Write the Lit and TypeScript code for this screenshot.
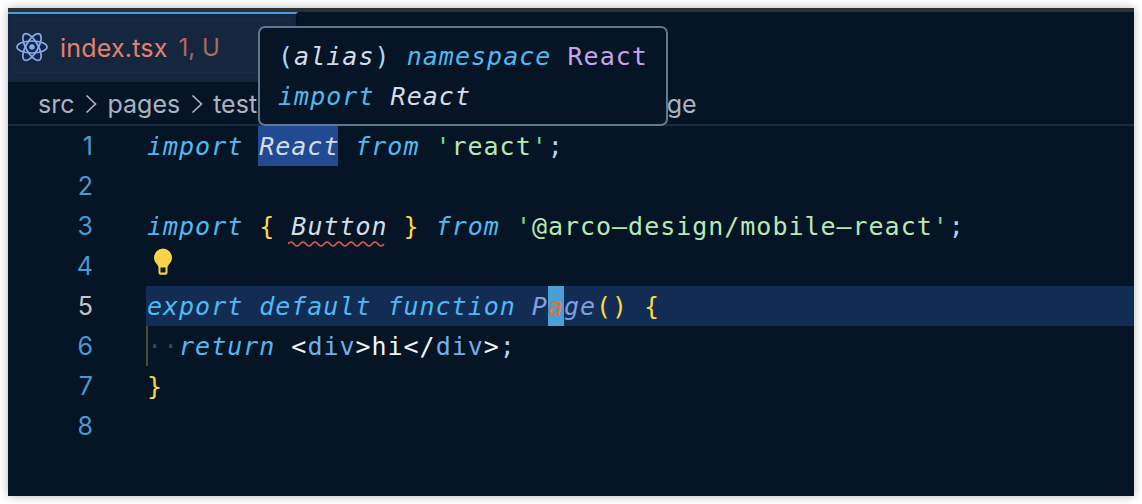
import { LitElement, html, css } from "lit";
import { customElement } from "lit/decorators.js";

const chevron = html`<svg class="chev" viewBox="0 0 12 20" width="12" height="20"><path d="M1.500 1.500 10.500 10 1.500 18.500" fill="none" stroke="#a9b3c1" stroke-width="1.7"/></svg>`;

@customElement("app-root")
export class AppRoot extends LitElement {
  static styles = css`
    :host { display: block; width: 1142px; height: 504px; background: #fff; padding: 8px; box-sizing: border-box; overflow: hidden; }
    .window { position: relative; height: 488px; display: flex; flex-direction: column; background: #051525; border-top: 4px solid #2f3234; box-sizing: border-box; box-shadow: 0 0 9px rgba(0,0,0,.28); overflow: hidden; }
    .tabbar { height: 70px; display: flex; flex: none; }
    .tab { width: 290px; box-sizing: border-box; background: #15273f; border-top: 2px solid #4a9fd8; border-right: 2px solid #0a0f15; padding: 6px 6px 9px; }
    .tab-inner { height: 100%; box-sizing: border-box; border: 1px solid #1a2d47; display: flex; align-items: center; padding-left: 1px; font-family: Inter, "Liberation Sans", sans-serif; }
    .react { flex: none; margin-right: 12px; }
    .name { font-size: 25px; color: #e5806e; letter-spacing: .2px; padding-top: 2px; }
    .badge { font-size: 24px; color: #b2675f; margin-left: 11px; padding-top: 2px; }
    .crumbs { height: 44px; flex: none; box-sizing: border-box; border-bottom: 2px solid #1a2b3d; display: flex; align-items: center; gap: 10.5px; padding: 2px 0 0 30px; font-family: Inter, "Liberation Sans", sans-serif; font-size: 25px; color: #a9b3c1; }
    .crumbs .chev { flex: none; }
    .crumbs .more { margin-left: 3px; }
    .crumbs .page { margin-left: 102px; }
    .editor { display: flex; flex: 1; font-family: "DejaVu Sans Mono", monospace; font-size: 25px; letter-spacing: .98px; }
    .gutter { width: 138px; flex: none; box-sizing: border-box; padding-right: 53px; text-align: right; color: #4a9ad0; font-size: 25px; letter-spacing: 0; font-family: Inter, sans-serif; }
    .gutter div { height: 40px; line-height: 40px; }
    .gutter .cur { color: #c6c6c6; }
    .code { flex: 1; }
    .line { height: 40px; line-height: 42px; white-space: pre; color: #d5dce8; position: relative; padding-left: 1px; }
    .line.hl { background: #132c54; }
    .kw { color: #4fb9f2; font-style: italic; }
    .id { color: #d5dce8; font-style: italic; }
    .sel { background: #224a92; display: inline-block; height: 40px; margin: 0 1.2px 0 -1.2px; padding-left: 1.2px; width: 78.8px; }
    .y { color: #fbd743; }
    .str { color: #b9e8b3; }
    .q { color: #76dd8a; }
    .p { color: #a9d8f5; }
    .fn { color: #7f9fe2; font-style: italic; }
    .cursor { background: #4b9fd5; color: #e0703a; display: inline-block; height: 40px; font-style: italic; }
    .tag { color: #72aeea; }
    .w { color: #f2f5f8; }
    .dots { color: #3e4a4d; }
    .guide { box-shadow: inset 2px 0 0 #4c4c33; }
    .squig { position: relative; display: inline-block; }
    .squig svg { position: absolute; left: -3px; top: 34px; }
    .bulb { display: block; position: absolute; left: 7px; top: 2px; }
    .hover { position: absolute; left: 250px; top: 14px; box-sizing: border-box; border: 2px solid #5e7a91; border-radius: 7px; background: #051525; padding: 8px 18px; font-family: "DejaVu Sans Mono", monospace; font-size: 25px; letter-spacing: 1.03px; z-index: 2; }
    .hover div { height: 40px; line-height: 42px; white-space: pre; }
    .pu { color: #c8a2ee; }
  `;

  render() {
    const nums = [1, 2, 3, 4, 5, 6, 7, 8];
    return html`<div class="window">
      <div class="tabbar">
        <div class="tab"><div class="tab-inner">
          <svg class="react" width="32" height="32" viewBox="0 0 32 32" fill="none" stroke="#86acf0" stroke-width="1.7">
            <ellipse cx="16" cy="16" rx="15" ry="6"/>
            <ellipse cx="16" cy="16" rx="15" ry="6" transform="rotate(60 16 16)"/>
            <ellipse cx="16" cy="16" rx="15" ry="6" transform="rotate(120 16 16)"/>
            <circle cx="16" cy="16" r="2.7" fill="#86acf0" stroke="none"/>
          </svg>
          <span class="name">index.tsx</span><span class="badge">1, U</span>
        </div></div>
      </div>
      <div class="crumbs">
        <span>src</span>${chevron}<span>pages</span>${chevron}<span>test</span>${chevron}<span class="more">demo</span>${chevron}<span class="more">index.tsx</span>${chevron}<span class="page">Page</span>
      </div>
      <div class="editor">
        <div class="gutter">${nums.map((n) => html`<div class=${n === 5 ? "cur" : ""}>${n}</div>`)}</div>
        <div class="code">
          <div class="line"><span class="kw">import</span> <span class="id sel">React</span> <span class="kw">from</span> <span class="q">'</span><span class="str">react</span><span class="q">'</span><span class="p">;</span></div>
          <div class="line"> </div>
          <div class="line"><span class="kw">import</span> <span class="y">{</span> <span class="id squig">Button<svg width="102" height="8" viewBox="0 0 102 8" fill="none"><path d="M0 4Q3 0 6 4T12 4 18 4 24 4 30 4 36 4 42 4 48 4 54 4 60 4 66 4 72 4 78 4 84 4 90 4 96 4" stroke="#e2574f" stroke-width="1.7"/></svg></span> <span class="y">}</span> <span class="kw">from</span> <span class="q">'</span><span class="str">@arco—design/mobile—react</span><span class="q">'</span><span class="p">;</span></div>
          <div class="line"><svg class="bulb" width="20" height="27" viewBox="0 0 20 27"><path d="M10 .5a9.200 9.200 0 0 0-9 9.200c0 3.200 1.700 5.200 3.300 7 .8 1 1.200 1.900 1.200 3v5a2 2 0 0 0 2 2h5a2 2 0 0 0 2-2v-5c0-1.100.4-2 1.200-3 1.600-1.800 3.300-3.800 3.300-7A9.200 9.200 0 0 0 10 .5z" fill="#f9d246"/><rect x="7.500" y="19.500" width="5" height="5" fill="#0a1a22"/></svg></div>
          <div class="line hl"><span class="kw">export default function</span> <span class="fn">P</span><span class="cursor">a</span><span class="fn">ge</span><span class="y">()</span> <span class="y">{</span></div>
          <div class="line guide"><span class="dots">··</span><span class="kw">return</span> <span class="w">&lt;</span><span class="tag">div</span><span class="w">&gt;hi&lt;/</span><span class="tag">div</span><span class="w">&gt;</span><span class="p">;</span></div>
          <div class="line"><span class="y">}</span></div>
          <div class="line"> </div>
        </div>
      </div>
      <div class="hover">
        <div><span class="p">(</span><span class="id">alias</span><span class="p">)</span> <span class="kw">namespace</span> <span class="pu">React</span></div>
        <div><span class="kw">import</span> <span class="id">React</span></div>
      </div>
    </div>`;
  }
}
